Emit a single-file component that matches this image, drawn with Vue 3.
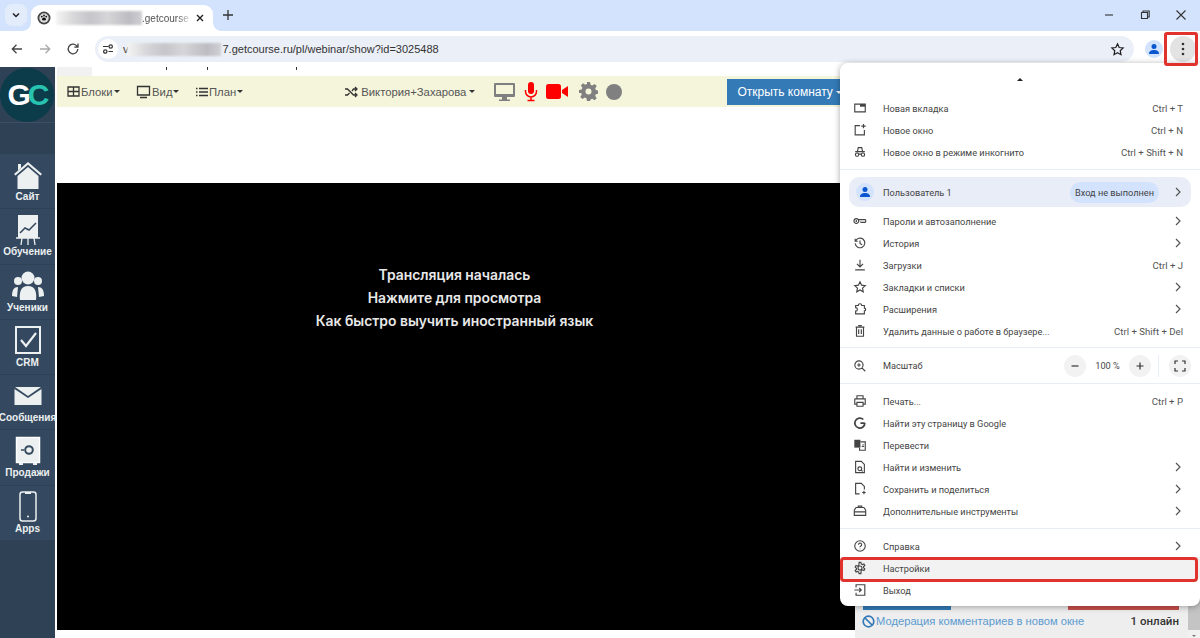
<script setup>
const icons = {
  tab: { d: 'M2 3.500h12v9H2z', f: 'M8 3.500h6v3H8z' },
  win: { d: 'M8 3H2.500v10.500h10.500V8M12 1v5M9.500 3.500h5' },
  incog: { d: 'M2.500 7.500h11M5 7.500l1-4.500h4l1 4.500M6.500 11a1.900 1.900 0 1 1-3.800 0 1.900 1.900 0 0 1 3.800 0zM13.300 11a1.900 1.900 0 1 1-3.800 0 1.900 1.900 0 0 1 3.800 0zM6.500 10.500h3' },
  key: { d: 'M6.500 8a2.700 2.700 0 1 1-5.400 0 2.700 2.700 0 0 1 5.400 0zM6.500 6.500h7.500a1 1 0 0 1 .5 .5v2a1 1 0 0 1-.5 .5H9.500a1 1 0 0 1-1-1', f: 'M3 7h1.600v2H3z' },
  history: { d: 'M2.500 3v3h3M2.800 6A5.500 5.500 0 1 1 2.500 8.500M8 5v3.500l2.500 1.500' },
  down: { d: 'M8 2v8M4.500 6.800L8 10.300l3.500-3.500M2.500 13.500h11' },
  star: { d: 'M8 2l1.800 3.900 4.200.5-3.100 2.900.8 4.200L8 11.400l-3.700 2.100.8-4.200L2 6.400l4.200-.5z' },
  ext: { d: 'M3 4h3a2 2 0 0 1 4 0h3v3a1.500 1.500 0 0 1 0 3v3.500H3V10.500a2 2 0 0 0 0-4z' },
  trash: { d: 'M3 3.500h10M4 3.500v10.500h8V3.500M6 1.800h4M6.500 6v5.500M9.500 6v5.500' },
  zoom: { d: 'M11.500 6.800a4.700 4.700 0 1 1-9.400 0 4.700 4.700 0 0 1 9.400 0zM10.200 10.200L14 14M6.800 4.800v4M4.800 6.800h4' },
  print: { d: 'M4.500 5V2h7v3M2 5.500h12v6h-2.500M4.500 11.500H2v-6M4.500 9.500h7V14h-7z' },
  google: { d: 'M13.500 8H8.500M13.500 8a5.700 5.700 0 1 1-1.700-4', w: 2 },
  translate: { d: 'M8.500 4.500h5.500v9.500H7.500V11M10 9.500h2.500M11 7.500h1', f: 'M1.500 2h7v9h-7z' },
  find: { d: 'M3 1.500h6.500l3.500 3.500v9.500H3zM10 10a2.200 2.200 0 1 1-4.400 0 2.200 2.200 0 0 1 4.400 0zM9.500 11.500l1.500 1.500' },
  save: { d: 'M7.500 13.500H3v-12h6.500l3.500 3.500v3.500M12.500 10v4M10.500 12h4' },
  tools: { d: 'M1.500 7l2-3h9l2 3v6h-13zM1.500 9h13M6 4V2.500h4V4' },
  help: { d: 'M14 8A6 6 0 1 1 2 8a6 6 0 0 1 12 0zM6.300 6.500a1.800 1.800 0 1 1 2.700 1.500c-.7.400-1 .8-1 1.500M8 11v.8' },
  gear: { d: 'M10.300 8a2.300 2.300 0 1 1-4.600 0 2.300 2.300 0 0 1 4.600 0zM7 1.500h2l.4 1.900 1.300.7 1.800-.7 1 1.800-1.400 1.200v1.400l1.400 1.200-1 1.800-1.800-.7-1.300.7L9 14.500H7l-.4-1.900-1.300-.7-1.800.7-1-1.800 1.400-1.200V8.200L2.500 7l1-1.800 1.800.7 1.300-.7z' },
  exit: { d: 'M3.500 5V2h10v12h-10v-3M1.500 8h8M7 5.500L9.500 8 7 10.500' },
}

const groups = [
  [
    { icon: 'tab', label: 'Новая вкладка', hint: 'Ctrl + T' },
    { icon: 'win', label: 'Новое окно', hint: 'Ctrl + N' },
    { icon: 'incog', label: 'Новое окно в режиме инкогнито', hint: 'Ctrl + Shift + N' },
  ],
  [
    { icon: 'key', label: 'Пароли и автозаполнение', more: true },
    { icon: 'history', label: 'История', more: true },
    { icon: 'down', label: 'Загрузки', hint: 'Ctrl + J' },
    { icon: 'star', label: 'Закладки и списки', more: true },
    { icon: 'ext', label: 'Расширения', more: true },
    { icon: 'trash', label: 'Удалить данные о работе в браузере...', hint: 'Ctrl + Shift + Del' },
  ],
  [
    { icon: 'print', label: 'Печать...', hint: 'Ctrl + P' },
    { icon: 'google', label: 'Найти эту страницу в Google' },
    { icon: 'translate', label: 'Перевести' },
    { icon: 'find', label: 'Найти и изменить', more: true },
    { icon: 'save', label: 'Сохранить и поделиться', more: true },
    { icon: 'tools', label: 'Дополнительные инструменты', more: true },
  ],
  [
    { icon: 'help', label: 'Справка', more: true },
    { icon: 'gear', label: 'Настройки', marked: true },
    { icon: 'exit', label: 'Выход' },
  ],
]

const navItems = [
  { key: 'site', label: 'Сайт' },
  { key: 'learn', label: 'Обучение' },
  { key: 'people', label: 'Ученики' },
  { key: 'crm', label: 'CRM' },
  { key: 'mail', label: 'Сообщения' },
  { key: 'safe', label: 'Продажи' },
  { key: 'apps', label: 'Apps' },
]
</script>

<template>
  <div class="window">
    <header class="tabstrip">
      <button class="tab-search" type="button">
        <svg width="10" height="10" viewBox="0 0 10 10"><path d="M2 3.500l3 3 3-3" fill="none" stroke="#222" stroke-width="1.500" /></svg>
      </button>
      <div class="tab">
        <svg class="favicon" width="14" height="14" viewBox="0 0 14 14">
          <circle cx="7" cy="7" r="6.500" fill="#444" />
          <circle cx="7" cy="7" r="4.700" fill="#ddd" />
          <path d="M7 6.500c1.500 0 2.300 1.500 2 2.500-.8.500-3.200.500-4 0-.3-1 .5-2.500 2-2.500z" fill="#111" />
          <circle cx="4.800" cy="5.600" r=".9" fill="#111" /><circle cx="7" cy="4.500" r=".9" fill="#111" /><circle cx="9.200" cy="5.600" r=".9" fill="#111" />
        </svg>
        <span class="blur-block tab-blur"></span>
        <span class="tab-title">.getcourse</span>
        <svg class="tab-close" width="10" height="10" viewBox="0 0 10 10"><path d="M2 2l6 6M8 2L2 8" stroke="#222" stroke-width="1.400" /></svg>
      </div>
      <svg class="new-tab" width="12" height="12" viewBox="0 0 12 12"><path d="M6 1v10M1 6h10" stroke="#333" stroke-width="1.300" /></svg>
      <div class="window-controls">
        <svg width="12" height="12" viewBox="0 0 12 12"><path d="M2 6h8" stroke="#333" stroke-width="1.100" /></svg>
        <svg width="12" height="12" viewBox="0 0 12 12"><path d="M2.500 3.500h6v6h-6zM4 3.500V2h6.200v6H8.500" fill="none" stroke="#333" stroke-width="1.100" /></svg>
        <svg width="12" height="12" viewBox="0 0 12 12"><path d="M1.500 1.500l9 9M10.500 1.500l-9 9" stroke="#333" stroke-width="1.100" /></svg>
      </div>
    </header>

    <div class="toolbar">
      <svg width="14" height="14" viewBox="0 0 14 14"><path d="M12 7H2.500M6.500 2.800L2.300 7l4.200 4.200" fill="none" stroke="#444" stroke-width="1.300" /></svg>
      <svg width="14" height="14" viewBox="0 0 14 14"><path d="M2 7h9.500M7.500 2.800L11.700 7l-4.200 4.200" fill="none" stroke="#a9a9a9" stroke-width="1.300" /></svg>
      <svg width="14" height="14" viewBox="0 0 14 14"><path d="M11.800 7a4.800 4.800 0 1 1-1.400-3.400L12 5.200M12 1.500v3.700H8.300" fill="none" stroke="#444" stroke-width="1.300" /></svg>
      <div class="omnibox">
        <span class="site-chip">
          <svg width="12" height="12" viewBox="0 0 12 12"><path d="M1 3.500h5.500M6.500 8.500H11" stroke="#333" stroke-width="1.200" /><circle cx="8.700" cy="3.500" r="1.700" fill="none" stroke="#333" stroke-width="1.200" /><circle cx="3.300" cy="8.500" r="1.700" fill="none" stroke="#333" stroke-width="1.200" /></svg>
        </span>
        <span class="url-start">v</span>
        <span class="blur-block url-blur"></span>
        <span class="url">7.getcourse.ru/pl/webinar/show?id=3025488</span>
        <svg class="url-star" width="15" height="15" viewBox="0 0 16 16"><path d="M8 2l1.800 3.900 4.200.5-3.100 2.900.8 4.200L8 11.400l-3.700 2.100.8-4.200L2 6.400l4.200-.5z" fill="none" stroke="#222" stroke-width="1.300" /></svg>
      </div>
      <span class="avatar avatar-top">
        <svg width="12" height="12" viewBox="0 0 12 12"><circle cx="6" cy="3.500" r="2.500" fill="#0b57d0" /><path d="M1 11c0-3 2-4 5-4s5 1 5 4z" fill="#0b57d0" /></svg>
      </span>
      <span class="kebab">
        <svg width="4" height="14" viewBox="0 0 4 14"><circle cx="2" cy="2" r="1.300" fill="#333" /><circle cx="2" cy="7" r="1.300" fill="#333" /><circle cx="2" cy="12" r="1.300" fill="#333" /></svg>
      </span>
    </div>

    <div class="page">
      <aside class="sidebar">
        <div class="logo-cell">
          <div class="logo"><span class="logo-g">G</span><span class="logo-c">C</span></div>
        </div>
        <div class="side-gap"></div>
        <a v-for="item in navItems" :key="item.key" class="nav-item">
          <svg class="nav-icon" width="34" height="32" viewBox="0 0 34 32">
            <template v-if="item.key === 'site'">
              <path d="M3 15L17 3l14 12-1.500 1.500L17 5.800 4.500 16.500z" fill="#ecf0f1" />
              <path d="M6.500 17L17 8l10.500 9v13h-21z" fill="#ecf0f1" />
              <path d="M7 5h3v4l-3 2.500z" fill="#ecf0f1" />
            </template>
            <template v-else-if="item.key === 'learn'">
              <path d="M7 1h20v23H7z" fill="#ecf0f1" />
              <path d="M9 19l5-5 4 2 7-7" fill="none" stroke="#34495e" stroke-width="1.500" />
              <path d="M5 24h24M11 24l-1 7M17 24v7M23 24l1 7" stroke="#ecf0f1" stroke-width="1.300" />
            </template>
            <template v-else-if="item.key === 'people'">
              <circle cx="17" cy="8" r="6.500" fill="#ecf0f1" />
              <circle cx="7" cy="11" r="4" fill="#ecf0f1" /><circle cx="27" cy="11" r="4" fill="#ecf0f1" />
              <path d="M9 30c-1-8 1-14 8-14s9 6 8 14z" fill="#ecf0f1" />
              <path d="M1 26c0-6 2-9 6-9l-1 10zM33 26c0-6-2-9-6-9l1 10z" fill="#ecf0f1" />
            </template>
            <template v-else-if="item.key === 'crm'">
              <path d="M5 2h24v26H5z" fill="none" stroke="#ecf0f1" stroke-width="2" />
              <path d="M10 15l5 6 10-13" fill="none" stroke="#ecf0f1" stroke-width="2.200" />
            </template>
            <template v-else-if="item.key === 'mail'">
              <path d="M4 7h26L17 16z" fill="#ecf0f1" />
              <path d="M3.500 9L17 18 30.500 9v16h-27z" fill="#ecf0f1" />
            </template>
            <template v-else-if="item.key === 'safe'">
              <path d="M5.500 2.500h23v25h-23z" fill="#ecf0f1" stroke="#fff" stroke-width="1.500" />
              <circle cx="18" cy="15" r="3.800" fill="none" stroke="#34495e" stroke-width="2" />
              <path d="M10 15h3" stroke="#34495e" stroke-width="1.500" />
              <path d="M8 29h4M22 29h4" stroke="#ecf0f1" stroke-width="2" />
            </template>
            <template v-else>
              <rect x="9" y="1" width="16" height="29" rx="2.500" fill="none" stroke="#ecf0f1" stroke-width="1.500" />
              <path d="M14 2h6" stroke="#ecf0f1" stroke-width="2" />
              <circle cx="17" cy="25.500" r="1" fill="#ecf0f1" />
            </template>
          </svg>
          <span class="nav-label">{{ item.label }}</span>
        </a>
        <div class="side-rest"></div>
      </aside>

      <main class="content">
        <div class="strip"><span class="strip-tab"></span><i></i><i></i><i></i></div>
        <div class="room-bar">
          <span class="bar-link">
            <svg width="13" height="13" viewBox="0 0 13 13"><path d="M1 2h11v9H1zM1 6.500h11M6.500 2v9" fill="none" stroke="#333" stroke-width="1.300" /></svg>Блоки<b class="caret"></b>
          </span>
          <span class="bar-link">
            <svg width="15" height="14" viewBox="0 0 15 14"><path d="M1.500 1.500h12v8.500h-12z" fill="none" stroke="#333" stroke-width="1.300" /><path d="M4 12.500h7" stroke="#333" stroke-width="1.500" /></svg>Вид<b class="caret"></b>
          </span>
          <span class="bar-link">
            <svg width="12" height="12" viewBox="0 0 12 12"><path d="M3 2.500h9M3 6h9M3 9.500h9M0 2.500h1.500M0 6h1.500M0 9.500h1.500" stroke="#333" stroke-width="1.400" /></svg>План<b class="caret"></b>
          </span>
          <span class="bar-link presenter">
            <svg width="13" height="12" viewBox="0 0 13 12"><path d="M0 3h2.500l6 6H11M0 9h2.500l2-2M7 5l1.500-2H11M10 1l2 2-2 2M10 7l2 2-2 2" fill="none" stroke="#333" stroke-width="1.300" /></svg>Виктория+Захарова<b class="caret"></b>
          </span>
          <div class="room-icons">
            <svg width="23" height="20" viewBox="0 0 23 20"><path d="M2 1h19a1 1 0 0 1 1 1v12a1 1 0 0 1-1 1H2a1 1 0 0 1-1-1V2a1 1 0 0 1 1-1z" fill="#808080" /><path d="M3 3h17v9H3z" fill="#f5f5dc" /><path d="M9 15h5v2.500h3V19H6v-1.500h3z" fill="#808080" /></svg>
            <svg width="14" height="20" viewBox="0 0 14 20"><rect x="4" y="0" width="6" height="12" rx="3" fill="#f00" /><path d="M1.500 8v1.500a5.500 5.500 0 0 0 11 0V8M7 15v3M3.500 18.500h7" fill="none" stroke="#f00" stroke-width="1.500" /></svg>
            <svg width="22" height="15" viewBox="0 0 22 15"><rect x="0" y="0" width="15" height="15" rx="2.500" fill="#f00" /><path d="M16 6l6-4v11l-6-4z" fill="#f00" /></svg>
            <svg class="room-gear" width="19" height="19" viewBox="0 0 19 19"><path fill-rule="evenodd" d="M8 0h3l.6 2.700 1.600.7 2.400-1.500 2.100 2.100-1.500 2.400.7 1.600 2.700.6v3l-2.700.6-.7 1.600 1.500 2.400-2.100 2.100-2.400-1.500-1.600.7L11 19H8l-.6-2.700-1.600-.7-2.400 1.500-2.100-2.100 1.500-2.400-.7-1.600L0 11V8l2.700-.6.7-1.600-1.500-2.400L4 1.300l2.400 1.500 1.600-.7zM9.500 6.500a3 3 0 1 0 0 6 3 3 0 0 0 0-6z" fill="#808080" /></svg>
            <span class="rec-dot"></span>
          </div>
          <button class="open-room" type="button">Открыть комнату <b class="caret caret-light"></b></button>
        </div>
        <div class="blank"></div>
        <div class="work">
          <section class="stage">
            <p>Трансляция началась</p>
            <p>Нажмите для просмотра</p>
            <p>Как быстро выучить иностранный язык</p>
          </section>
          <section class="chat">
            <div class="chat-bars"><span class="bar-blue"></span><span class="bar-red"></span></div>
            <div class="chat-foot">
              <svg width="13" height="13" viewBox="0 0 13 13"><circle cx="6.500" cy="6.500" r="5.300" fill="none" stroke="#337ab7" stroke-width="1.700" /><path d="M3 3l7 7" stroke="#337ab7" stroke-width="1.700" /></svg>
              <span class="chat-link">Модерация комментариев в новом окне</span>
              <span class="online">1 онлайн</span>
            </div>
          </section>
          <div class="scrollbar"><span class="scroll-arrow"></span></div>
        </div>
      </main>
    </div>

    <div class="menu">
      <div class="menu-arrow"></div>
      <template v-for="(group, i) in groups" :key="i">
        <div v-for="row in group" :key="row.label" class="row" :class="{ 'row-marked': row.marked }">
          <svg class="row-icon" width="14" height="14" viewBox="0 0 16 16">
            <path v-if="icons[row.icon].f" :d="icons[row.icon].f" fill="#444" />
            <path :d="icons[row.icon].d" fill="none" stroke="#444" :stroke-width="icons[row.icon].w || 1.300" />
          </svg>
          <span class="row-label">{{ row.label }}</span>
          <span v-if="row.hint" class="row-hint">{{ row.hint }}</span>
          <svg v-if="row.more" class="chevron" width="8" height="10" viewBox="0 0 8 10"><path d="M2 1l4 4-4 4" fill="none" stroke="#555" stroke-width="1.200" /></svg>
        </div>
        <template v-if="i === 0">
          <div class="rule rule-user"></div>
          <div class="user">
            <span class="avatar">
              <svg width="12" height="12" viewBox="0 0 12 12"><circle cx="6" cy="3.500" r="2.500" fill="#0b57d0" /><path d="M1 11c0-3 2-4 5-4s5 1 5 4z" fill="#0b57d0" /></svg>
            </span>
            <span class="row-label">Пользователь 1</span>
            <span class="signin">Вход не выполнен</span>
            <svg class="chevron" width="8" height="10" viewBox="0 0 8 10"><path d="M2 1l4 4-4 4" fill="none" stroke="#555" stroke-width="1.200" /></svg>
          </div>
        </template>
        <template v-if="i === 1">
          <div class="rule rule-zoom"></div>
          <div class="zoom-row">
            <svg class="row-icon" width="14" height="14" viewBox="0 0 16 16"><path :d="icons.zoom.d" fill="none" stroke="#444" stroke-width="1.300" /></svg>
            <span class="row-label">Масштаб</span>
            <span class="round-btn round-minus">
              <svg width="10" height="10" viewBox="0 0 10 10"><path d="M1.500 5h7" stroke="#333" stroke-width="1.200" /></svg>
            </span>
            <span class="zoom-value">100 %</span>
            <span class="round-btn">
              <svg width="10" height="10" viewBox="0 0 10 10"><path d="M1.500 5h7M5 1.500v7" stroke="#333" stroke-width="1.200" /></svg>
            </span>
            <span class="zoom-sep"></span>
            <span class="round-btn">
              <svg width="12" height="12" viewBox="0 0 12 12"><path d="M1 4V1h3M8 1h3v3M11 8v3H8M4 11H1V8" fill="none" stroke="#333" stroke-width="1.200" /></svg>
            </span>
          </div>
          <div class="rule rule-after-zoom"></div>
        </template>
        <div v-if="i === 2" class="rule rule-help"></div>
      </template>
    </div>

    <div class="kebab-mark"></div>
  </div>
</template>

<style scoped>
.window {
  position: relative;
  width: 1200px;
  height: 638px;
  overflow: hidden;
  display: flex;
  flex-direction: column;
  background: #fff;
  font-family: 'Liberation Sans', Arial, sans-serif;
  color: #333;
}

/* browser chrome */
.tabstrip {
  height: 31px;
  flex: none;
  display: flex;
  align-items: flex-end;
  background: #d3e3fd;
  position: relative;
}
.tab-search {
  all: unset;
  width: 22px;
  height: 22px;
  margin: 0 0 5px 5px;
  border-radius: 7px;
  background: #e3ecfb;
  display: flex;
  align-items: center;
  justify-content: center;
}
.tab {
  position: relative;
  width: 182px;
  height: 26px;
  margin-left: 4px;
  box-sizing: border-box;
  padding: 0 8px 0 6px;
  background: #fff;
  border-radius: 9px 9px 0 0;
  display: flex;
  align-items: center;
  font-size: 10px;
  color: #555;
}
.tab::before,
.tab::after {
  content: '';
  position: absolute;
  bottom: 0;
  width: 8px;
  height: 8px;
}
.tab::before {
  left: -8px;
  background: radial-gradient(circle at 0 0, #d3e3fd 7.500px, #fff 8px);
}
.tab::after {
  right: -8px;
  background: radial-gradient(circle at 100% 0, #d3e3fd 7.500px, #fff 8px);
}
.favicon { flex: none; }
.blur-block {
  display: block;
  background: linear-gradient(90deg, #f4f4f4, #d8d8da 20%, #c6c6ca 40%, #d6d6d8 60%, #bcbcc2 85%, #cfcfd4);
  filter: blur(1px);
}
.tab-blur {
  width: 86px;
  height: 14px;
  margin-left: 5px;
}
.tab-title {
  white-space: nowrap;
  -webkit-mask-image: linear-gradient(90deg, #000 75%, rgba(0, 0, 0, 0.25));
  mask-image: linear-gradient(90deg, #000 75%, rgba(0, 0, 0, 0.25));
}
.tab-close { margin-left: auto; }
.new-tab {
  margin: 0 0 10px 9px;
}
.window-controls {
  margin-left: auto;
  display: flex;
  gap: 24px;
  padding: 0 13px 10px 0;
}
.toolbar {
  height: 36px;
  flex: none;
  display: flex;
  align-items: center;
  box-sizing: border-box;
  padding-left: 10px;
  gap: 14px;
  background: #fff;
}
.omnibox {
  width: 1039px;
  height: 26px;
  margin-left: 1px;
  box-sizing: border-box;
  padding: 0 9px 0 3px;
  border-radius: 13px;
  background: #ebeff7;
  display: flex;
  align-items: center;
  font-size: 11px;
  color: #333;
}
.site-chip {
  width: 20px;
  height: 20px;
  border-radius: 50%;
  background: #fff;
  display: flex;
  align-items: center;
  justify-content: center;
}
.url-start { margin-left: 5px; }
.url-blur {
  width: 94px;
  height: 13px;
  margin-left: -2px;
}
.url { margin-left: 2px; }
.url-star { margin-left: auto; }
.avatar {
  width: 18px;
  height: 18px;
  border-radius: 50%;
  background: #d3e3fd;
  display: flex;
  flex: none;
  align-items: center;
  justify-content: center;
}
.avatar-top { margin-left: -3px; }
.kebab {
  width: 26px;
  height: 26px;
  margin-left: -7px;
  border-radius: 50%;
  background: #e3e3e3;
  display: flex;
  align-items: center;
  justify-content: center;
}
.kebab-mark {
  position: absolute;
  left: 1164px;
  top: 32px;
  width: 28px;
  height: 28px;
  border: 3px solid #e0332d;
  border-radius: 3px;
}

/* page */
.page {
  flex: 1;
  min-height: 0;
  display: flex;
}
.sidebar {
  width: 55px;
  flex: none;
  display: flex;
  flex-direction: column;
  background: #2f4155;
}
.logo-cell {
  height: 56px;
  flex: none;
  border-bottom: 1px solid #3c4f63;
  box-sizing: border-box;
  overflow: hidden;
}
.logo {
  width: 54px;
  height: 54px;
  margin-top: 1px;
  border-radius: 50%;
  background: #0c3c49;
  display: flex;
  align-items: center;
  justify-content: center;
  font-weight: 700;
  font-size: 30px;
  letter-spacing: -3px;
}
.logo-g { color: #fff; }
.logo-c { color: #27c2b0; }
.side-gap {
  height: 30px;
  flex: none;
}
.nav-item {
  height: 55.300px;
  flex: none;
  box-sizing: border-box;
  padding-top: 5px;
  border-top: 1px solid #2f4155;
  background: #34495f;
  display: flex;
  flex-direction: column;
  align-items: center;
}
.nav-icon { flex: none; }
.nav-label {
  font-size: 10px;
  font-weight: 700;
  line-height: 12px;
  color: #ecf0f1;
  white-space: nowrap;
}
.content {
  flex: 1;
  min-width: 0;
  margin-left: 2px;
  display: flex;
  flex-direction: column;
}
.strip {
  height: 9px;
  flex: none;
  display: flex;
  gap: 40px;
}
.strip-tab {
  width: 35px;
  background: #f1f1f1;
}
.strip i {
  width: 1px;
  height: 3px;
  background: #333;
}
.strip i:nth-child(2) { margin-left: 34px; }
.strip i:nth-child(4) { margin-left: 48px; }
.room-bar {
  height: 31px;
  flex: none;
  display: flex;
  align-items: center;
  padding-left: 10px;
  background: #f5f5dc;
  font-size: 11.300px;
  color: #555;
}
.bar-link {
  display: flex;
  align-items: center;
  gap: 1px;
  margin-right: 16.500px;
}
.presenter {
  margin: 0 0 0 85.500px;
  gap: 3px;
}
.caret {
  width: 0;
  height: 0;
  border: 3.500px solid transparent;
  border-top-color: #333;
  border-bottom-width: 0;
}
.caret-light {
  display: inline-block;
  vertical-align: 2px;
  border-top-color: #fff;
}
.room-icons {
  display: flex;
  align-items: center;
  gap: 8px;
  margin-left: 18px;
}
.room-gear { margin-left: 3px; }
.rec-dot {
  width: 16px;
  height: 16px;
  border-radius: 50%;
  background: #808080;
}
.open-room {
  all: unset;
  height: 26px;
  margin-left: 105px;
  padding: 0 10px;
  background: #337ab7;
  color: #fff;
  font-size: 12px;
  line-height: 26px;
  white-space: nowrap;
}
.blank {
  height: 76px;
  flex: none;
}
.work {
  flex: 1;
  min-height: 0;
  display: flex;
}
.stage {
  width: 798px;
  height: 447px;
  flex: none;
  box-sizing: border-box;
  padding: 81px 3px 0 0;
  background: #000;
  color: #e8e8e8;
  text-align: center;
  font-family: Inter, 'Liberation Sans', sans-serif;
  font-size: 13.900px;
  font-weight: 600;
}
.stage p {
  margin: 0;
  line-height: 23px;
}
.chat {
  flex: 1;
  display: flex;
  flex-direction: column;
  justify-content: flex-end;
  background: #eeeeee;
}
.chat-bars {
  display: flex;
  justify-content: space-between;
  padding: 0 9px 0 8px;
}
.bar-blue {
  width: 88px;
  height: 4px;
  background: #337ab7;
}
.bar-red {
  width: 111px;
  height: 4px;
  background: #c9504c;
}
.chat-foot {
  height: 28px;
  display: flex;
  align-items: center;
  padding: 0 9px 6px 7px;
  box-sizing: border-box;
  font-size: 11.200px;
}
.chat-link {
  margin-left: 1px;
  color: #5a9bd0;
  white-space: nowrap;
}
.online {
  margin-left: auto;
  font-family: Roboto, 'Liberation Sans', sans-serif;
  font-size: 11.500px;
  font-weight: 500;
  color: #333;
}
.scrollbar {
  width: 12px;
  flex: none;
  box-sizing: border-box;
  display: flex;
  align-items: flex-end;
  justify-content: center;
  background: linear-gradient(#c4c4c4 calc(100% - 8px), #f1f1f1 calc(100% - 8px));
}
.scroll-arrow {
  margin-bottom: 1px;
  border: 2.500px solid transparent;
  border-top-color: #777;
  border-bottom-width: 0;
}

/* chrome menu */
.menu {
  position: absolute;
  left: 840px;
  top: 63px;
  width: 360px;
  height: 543px;
  box-sizing: border-box;
  background: #fff;
  border-radius: 8px 0 8px 8px;
  box-shadow: 0 1px 6px rgba(0, 0, 0, 0.35);
  font-family: Roboto, 'Liberation Sans', sans-serif;
  font-size: 9.200px;
  color: #444;
}
.menu-arrow {
  height: 34px;
  box-sizing: border-box;
  position: relative;
}
.menu-arrow::after {
  content: '';
  position: absolute;
  left: 177px;
  top: 15px;
  border: 3px solid transparent;
  border-bottom-color: #222;
  border-top-width: 0;
}
.row {
  height: 22px;
  display: flex;
  align-items: center;
  position: relative;
  padding: 0 17px 0 13px;
}
.row-icon {
  flex: none;
  width: 14px;
  margin-right: 16px;
}
.row-label { white-space: nowrap; }
.row-hint {
  margin-left: auto;
  font-size: 9.600px;
  color: #555;
  white-space: nowrap;
}
.chevron {
  flex: none;
  margin: 0 1px 0 auto;
}
.row-marked { background: #f2f2f2; }
.row-marked::after {
  content: '';
  position: absolute;
  left: 0;
  right: 2px;
  top: 0;
  bottom: -3px;
  border: 3px solid #e0332d;
  border-radius: 4px;
}
.rule {
  height: 1px;
  background: #e8edf7;
}
.rule-user { margin-top: 6px; }
.rule-zoom { margin-top: 5px; }
.rule-after-zoom { margin-bottom: 6px; }
.rule-help { margin: 6px 0; }
.user {
  height: 30px;
  margin: 7px 9px 3px;
  border-radius: 10px;
  background: #e9edf7;
  display: flex;
  align-items: center;
  padding: 0 8px 0 7px;
}
.user .avatar { margin-right: 9px; }
.signin {
  margin-left: auto;
  height: 21px;
  line-height: 21px;
  padding: 0 5px;
  border-radius: 11px;
  background: #d3e3fd;
}
.user .chevron { margin-left: 15px; }
.zoom-row {
  height: 35px;
  display: flex;
  align-items: center;
  padding: 0 9px 0 13px;
}
.round-btn {
  width: 22px;
  height: 22px;
  flex: none;
  border-radius: 50%;
  background: #f2f2f2;
  display: flex;
  align-items: center;
  justify-content: center;
}
.round-minus { margin-left: auto; }
.zoom-value {
  width: 43px;
  text-align: center;
}
.zoom-sep {
  width: 1px;
  height: 22px;
  margin: 0 10px 0 7px;
  background: #e8edf7;
}
</style>

<style>
html, body {
  margin: 0;
  background: #fff;
}
</style>
